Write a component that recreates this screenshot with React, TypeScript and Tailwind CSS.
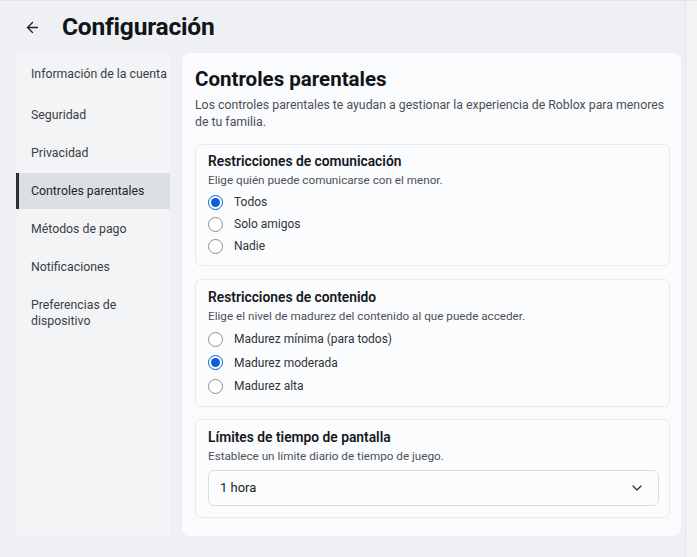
import { ArrowLeft, ChevronDown } from "lucide-react";

const navItems = [
  "Información de la cuenta",
  "Seguridad",
  "Privacidad",
  "Controles parentales",
  "Métodos de pago",
  "Notificaciones",
  "Preferencias de dispositivo",
];

function Radio({ label, checked }: { label: string; checked?: boolean }) {
  return (
    <label className="flex h-[22px] items-center gap-[11px]">
      <span
        className={
          checked
            ? "flex h-[15px] w-[15px] items-center justify-center rounded-full border-[1.5px] border-[#0b5fd6] bg-white"
            : "h-[15px] w-[15px] rounded-full border border-[#8a8f96] bg-white"
        }
      >
        {checked && <span className="h-[9px] w-[9px] rounded-full bg-[#0b5fd6]" />}
      </span>
      <span className="text-[12px] text-[#2f343a]">{label}</span>
    </label>
  );
}

function Section({
  title,
  desc,
  children,
  className = "",
}: {
  title: string;
  desc: string;
  children: React.ReactNode;
  className?: string;
}) {
  return (
    <section className={`rounded-md border border-[#e8ebee] bg-[#fbfcfd] pl-3 pr-[10px] ${className}`}>
      <h3 className="text-[13.8px] font-semibold leading-[18px] text-[#15181c]">{title}</h3>
      <p className="mt-[2px] text-[11.7px] leading-[16px] text-[#4b5158]">{desc}</p>
      {children}
    </section>
  );
}

export default function App() {
  return (
    <div
      className="flex h-[557px] w-[697px] overflow-hidden border-t border-[#e2e5e8] bg-[#eef0f3]"
      style={{ fontFamily: "Roboto, 'Liberation Sans', sans-serif" }}
    >
      <div className="flex flex-1 flex-col">
        {/* Header */}
        <header className="flex h-[52px] items-center pl-[24px]">
          <ArrowLeft className="h-[17px] w-[17px] text-[#1b1e22]" strokeWidth={1.8} />
          <h1 className="ml-[21px] text-[24.5px] font-bold tracking-[-0.2px] text-[#111418]">Configuración</h1>
        </header>

        <div className="flex gap-3 pl-4">
          {/* Sidebar */}
          <nav className="flex h-[483px] w-[154px] flex-col rounded-sm bg-[#f2f4f6] pt-[2px]">
            {navItems.map((item, i) => {
              const active = item === "Controles parentales";
              const last = i === navItems.length - 1;
              return (
                <div
                  key={item}
                  className={
                    active
                      ? "my-[1px] flex h-[36px] items-center border-l-[3px] border-[#2c3036] bg-[#dcdfe3] pl-3 pr-1 text-[12.3px] leading-[16px] text-[#22262b]"
                      : `flex ${last ? "h-[54px]" : "h-[38px] whitespace-nowrap"} ${i === 0 ? "mb-[3px]" : ""} items-center pl-[15px] pr-1 text-[12.3px] leading-[16px] text-[#3a3f45]`
                  }
                >
                  {item}
                </div>
              );
            })}
          </nav>

          {/* Main card */}
          <main className="h-[483px] w-[499px] rounded-lg bg-[#fafbfc] pl-[13px] pr-[11px] pt-[12px]">
            <h2 className="text-[20.5px] font-bold leading-[28px] text-[#111418]">Controles parentales</h2>
            <p className="mt-[4px] text-[12.3px] leading-[17px] text-[#4a5057]">
              Los controles parentales te ayudan a gestionar la experiencia de Roblox para menores de tu familia.
            </p>

            <Section
              title="Restricciones de comunicación"
              desc="Elige quién puede comunicarse con el menor."
              className="mt-[13px] h-[122px] pt-[7px]"
            >
              <div className="mt-[3px] flex flex-col">
                <Radio label="Todos" checked />
                <Radio label="Solo amigos" />
                <Radio label="Nadie" />
              </div>
            </Section>

            <Section
              title="Restricciones de contenido"
              desc="Elige el nivel de madurez del contenido al que puede acceder."
              className="mt-[13px] h-[128px] pt-[8px]"
            >
              <div className="mt-[4px] flex flex-col gap-[1.5px]">
                <Radio label="Madurez mínima (para todos)" />
                <Radio label="Madurez moderada" checked />
                <Radio label="Madurez alta" />
              </div>
            </Section>

            <Section
              title="Límites de tiempo de pantalla"
              desc="Establece un límite diario de tiempo de juego."
              className="mt-[12px] h-[99px] pt-[8px]"
            >
              <button className="mt-[6px] flex h-[36px] w-full items-center justify-between rounded-md border border-[#d9dde1] bg-[#fbfcfd] pl-[11px] pr-[13px] text-[13px] text-[#1c1f23]">
                1 hora
                <ChevronDown className="h-[16px] w-[16px] text-[#2a2e33]" strokeWidth={1.8} />
              </button>
            </Section>
          </main>
        </div>
      </div>
      {/* Scrollbar strip */}
      <div className="w-[12px] border-l border-[#e3e6e9] bg-[#f1f3f5]" />
    </div>
  );
}
